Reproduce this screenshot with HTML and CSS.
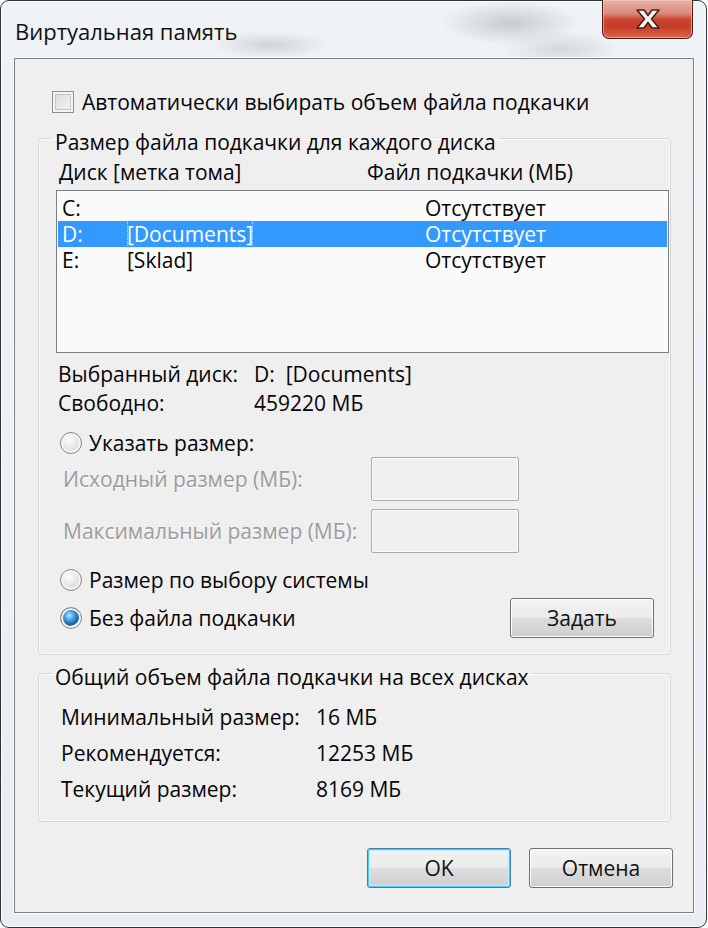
FILE: index.html
```html
<!DOCTYPE html>
<html lang="ru">
<head>
<meta charset="utf-8">
<title>Виртуальная память</title>
<link rel="stylesheet" href="styles.css">
</head>
<body>
<div class="window">
  <div class="titlebar">
    <span class="title">Виртуальная память</span>
    <button class="close" aria-label="Закрыть">
      <svg width="30" height="22" viewBox="0 0 30 22"><path d="M4 2 H11 L15 7.5 L19 2 H26 L18.5 11 L26 20 H19 L15 14.5 L11 20 H4 L11.5 11 Z" fill="#f4f4f4" stroke="#4a1f1a" stroke-width="1.6" stroke-linejoin="round"/></svg>
    </button>
  </div>
  <div class="client">
    <label class="check-row"><span class="checkbox"></span><span>Автоматически выбирать объем файла подкачки</span></label>

    <fieldset class="group group-disks">
      <legend>Размер файла подкачки для каждого диска</legend>
      <div class="list-head"><span class="h1">Диск [метка тома]</span><span>Файл подкачки (МБ)</span></div>
      <div class="listbox">
        <div class="row"><span class="c1">C:</span><span class="c2"></span><span class="c3">Отсутствует</span></div>
        <div class="row selected"><span class="c1">D:</span><span class="c2"><span class="focus">[Documents]</span></span><span class="c3">Отсутствует</span></div>
        <div class="row"><span class="c1">E:</span><span class="c2">[Sklad]</span><span class="c3">Отсутствует</span></div>
      </div>
      <div class="info">
        <div class="info-row"><span class="info-label">Выбранный диск:</span><span>D:&nbsp;&nbsp;[Documents]</span></div>
        <div class="info-row"><span class="info-label">Свободно:</span><span>459220 МБ</span></div>
      </div>
      <label class="radio-row first"><span class="radio"></span><span>Указать размер:</span></label>
      <div class="field-row r1"><span class="field-label">Исходный размер (МБ):</span><span class="input"></span></div>
      <div class="field-row r2"><span class="field-label">Максимальный размер (МБ):</span><span class="input"></span></div>
      <label class="radio-row sys"><span class="radio"></span><span>Размер по выбору системы</span></label>
      <div class="set-row">
        <label class="radio-row"><span class="radio checked"></span><span>Без файла подкачки</span></label>
        <button class="btn set">Задать</button>
      </div>
    </fieldset>

    <fieldset class="group group-total">
      <legend>Общий объем файла подкачки на всех дисках</legend>
      <div class="total-row"><span class="total-label">Минимальный размер:</span><span>16 МБ</span></div>
      <div class="total-row"><span class="total-label">Рекомендуется:</span><span>12253 МБ</span></div>
      <div class="total-row"><span class="total-label">Текущий размер:</span><span>8169 МБ</span></div>
    </fieldset>

    <div class="buttons">
      <button class="btn default">OK</button>
      <button class="btn">Отмена</button>
    </div>
  </div>
</div>
</body>
</html>
```

FILE: styles.css
```css
* { box-sizing: border-box; }
html, body { margin: 0; padding: 0; }
body {
  width: 708px;
  height: 928px;
  overflow: hidden;
  background: #ffffff;
  font-family: "Open Sans", "Noto Sans", "DejaVu Sans", sans-serif;
  font-size: 21px;
  color: #050505;
}
.window {
  width: 707px;
  height: 928px;
  border: 1px solid #2f3439;
  border-radius: 9px;
  background:
    radial-gradient(ellipse 70px 22px at 510px 22px, rgba(150,155,160,.45), rgba(150,155,160,0)),
    radial-gradient(ellipse 60px 14px at 270px 44px, rgba(150,155,160,.35), rgba(150,155,160,0)),
    radial-gradient(ellipse 60px 18px at 560px 48px, rgba(150,155,160,.3), rgba(150,155,160,0)),
    linear-gradient(#f0f3f6, #e9edf1);
  box-shadow: inset 0 0 0 1px rgba(255,255,255,.85);
  display: flex;
  flex-direction: column;
  padding: 0 12px 14px 13px;
}
.titlebar {
  height: 57px;
  display: flex;
  justify-content: space-between;
  align-items: flex-start;
}
.title {
  margin: 15px 0 0 1px;
  font-size: 22px;
  color: #111;
}
.close {
  width: 91px;
  height: 39px;
  margin: -1px 1px 0 0;
  padding: 0;
  border: 1px solid #4e1a14;
  border-top: none;
  border-radius: 0 0 7px 7px;
  background: linear-gradient(#e8b3a8 0%, #dc8a7b 35%, #c94530 52%, #c73d27 70%, #d9644b 100%);
  box-shadow: inset 0 0 0 1px rgba(255,210,200,.55);
  display: flex;
  align-items: center;
  justify-content: center;
}
.close svg { display: block; }
.client {
  flex: 1;
  border: 1px solid #7b8086;
  box-shadow: 0 0 0 1px rgba(255,255,255,.9);
  background: #efefef;
  display: flex;
  flex-direction: column;
}
.check-row {
  display: flex;
  align-items: center;
  gap: 8px;
  margin: 31px 0 0 37px;
  height: 24px;
}
.checkbox {
  width: 22px;
  height: 22px;
  border: 1px solid #8e8f8f;
  background: linear-gradient(135deg, #d8d8d8, #f6f6f6);
  box-shadow: inset 0 0 0 2px #f4f4f4, inset 0 0 0 3px #c6c6c6;
}
.group {
  margin: 9px 22px 0 23px;
  padding: 0 1px 16px 17px;
  border: 1px solid #d3d8db;
  border-radius: 4px;
  box-shadow: inset 0 0 0 1px #fbfbfb;
  min-width: 0;
}
.group legend {
  margin-left: -4px;
  padding: 8px 3px 0;
  line-height: 22px;
}
.list-head {
  display: flex;
  margin-top: 6px;
  line-height: 26px;
  padding-left: 3px;
}
.list-head .h1 { width: 308px; }
.listbox {
  margin-top: 5px;
  height: 163px;
  border: 1px solid #7a7f86;
  background: #fafafa;
  padding: 4px 1px;
}
.row {
  display: flex;
  height: 26px;
  line-height: 26px;
  padding-left: 4px;
}
.row .c1 { width: 65px; }
.row .c2 { width: 298px; }
.row.selected { background: #3399ff; color: #fff; }
.focus { outline: 1px dotted #cfe3ff; outline-offset: -1px; }
.info { margin-top: 7px; padding-left: 2px; }
.info-row { display: flex; line-height: 29px; }
.info-label { width: 196px; }
.radio-row {
  display: flex;
  align-items: center;
  gap: 7px;
  height: 26px;
  padding-left: 4px;
}
.radio-row.first { margin-top: 12px; }
.radio-row.sys { margin-top: 14px; }
.radio {
  width: 22px;
  height: 22px;
  border-radius: 50%;
  border: 1px solid #8a8a8a;
  background: radial-gradient(circle at 40% 35%, #fdfdfd 0%, #e2e2e2 55%, #cfcfcf 100%);
  box-shadow: inset 0 0 0 2px #f7f7f7;
}
.radio.checked {
  background:
    radial-gradient(circle at 42% 38%, #bfe6ff 0%, #3d9be0 30%, #135a9a 58%, rgba(19,90,154,0) 62%),
    radial-gradient(circle at 40% 35%, #fdfdfd 0%, #e2e2e2 70%, #cfcfcf 100%);
}
.field-row {
  display: flex;
  align-items: center;
  padding-left: 7px;
  color: #9b9b9b;
  text-shadow: 0 1px 0 #ffffff;
}
.field-row.r1 { margin-top: 1px; }
.field-row.r2 { margin-top: 8px; }
.field-label { width: 308px; }
.input {
  width: 148px;
  height: 44px;
  border: 1px solid #a8abaf;
  border-radius: 2px;
  background: #f0f0f0;
  box-shadow: inset 0 0 0 1px #fafafa;
}
.set-row {
  display: flex;
  align-items: center;
  justify-content: space-between;
  margin-top: 5px;
  padding-right: 15px;
}
.btn {
  width: 144px;
  height: 40px;
  padding: 0;
  font-family: inherit;
  font-size: 21px;
  color: #111;
  border: 1px solid #707070;
  border-radius: 3px;
  background: linear-gradient(#f3f3f3 0%, #ebebeb 48%, #dddddd 52%, #cfcfcf 100%);
  box-shadow: inset 0 0 0 1px #fcfcfc;
}
.btn.default {
  border-color: #3c7fb1;
  box-shadow: inset 0 0 0 1px #48d0f7, inset 0 0 0 2px #c2eafc;
}
.group-total {
  margin-top: 3px;
  padding: 0 1px 14px 22px;
}
.group-total legend { margin-left: -9px; }
.total-row { display: flex; line-height: 36px; }
.total-row:first-of-type { margin-top: 11px; }
.total-label { width: 255px; }
.buttons {
  display: flex;
  justify-content: flex-end;
  gap: 18px;
  margin-top: 26px;
  padding-right: 20px;
}
```
